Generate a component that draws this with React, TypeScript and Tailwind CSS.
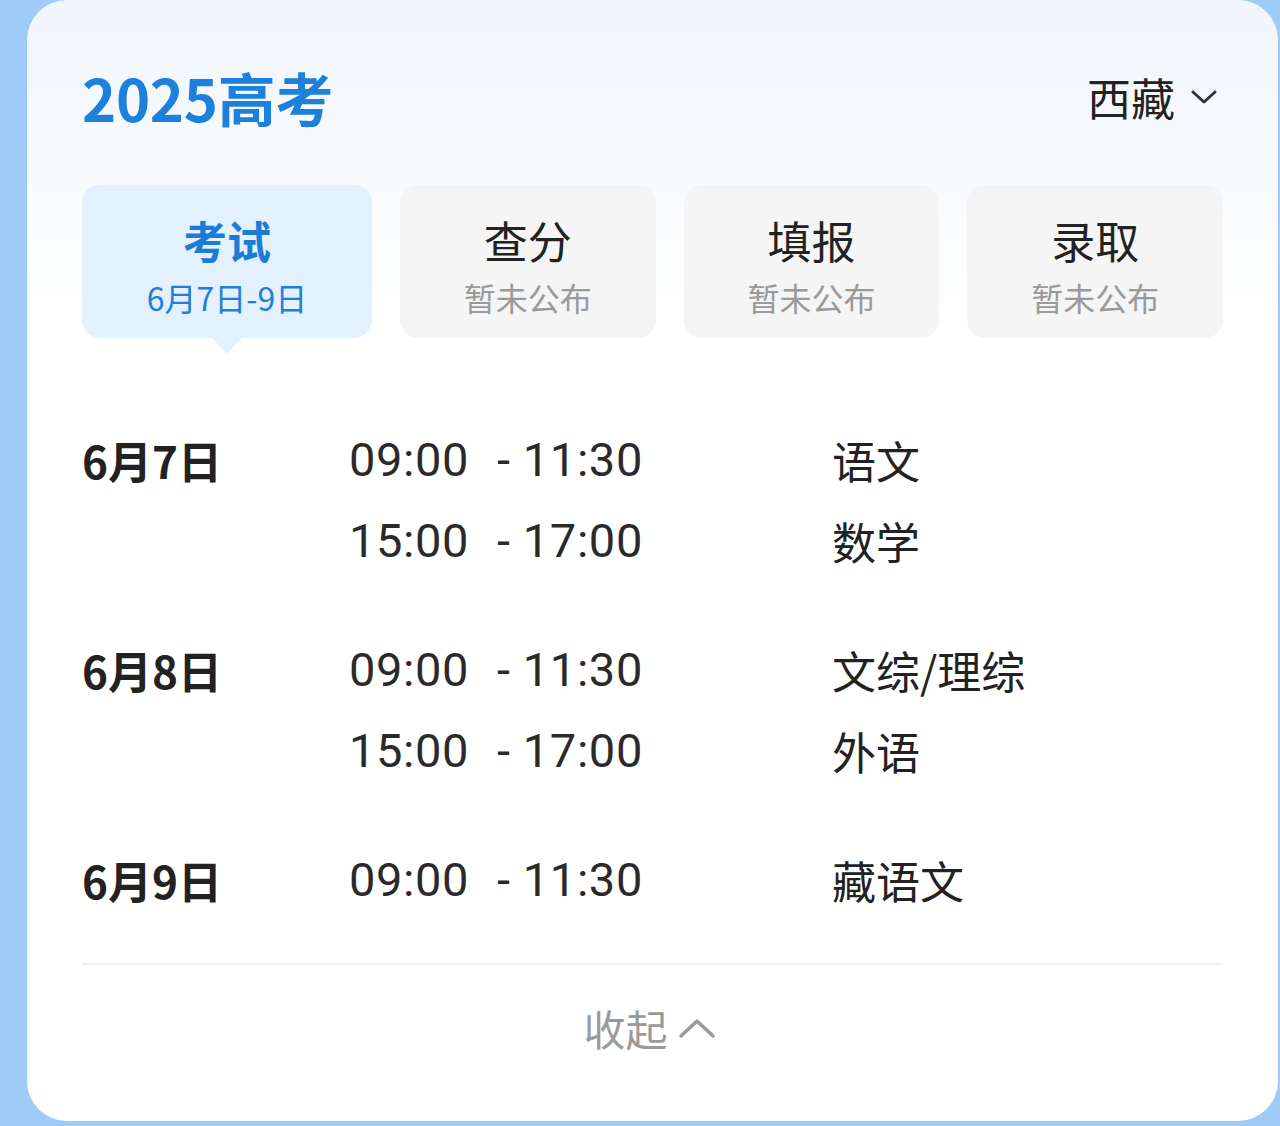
import React from "react";

const cjk = { fontFamily: '"Noto Sans CJK SC", "Noto Sans", sans-serif' };
const num = { fontFamily: 'Roboto, "Noto Sans CJK SC", sans-serif' };

type Row = { date?: string; start: string; end: string; subject: string; gapTop?: boolean };

const rows: Row[] = [
  { date: "6月7日", start: "09:00", end: "11:30", subject: "语文" },
  { start: "15:00", end: "17:00", subject: "数学" },
  { date: "6月8日", start: "09:00", end: "11:30", subject: "文综/理综", gapTop: true },
  { start: "15:00", end: "17:00", subject: "外语" },
  { date: "6月9日", start: "09:00", end: "11:30", subject: "藏语文", gapTop: true },
];

function Tab({ title, sub, active }: { title: string; sub: string; active?: boolean }) {
  return (
    <div
      className={
        "relative flex flex-col items-center rounded-[18px] pt-[33px] " +
        (active ? "bg-[#e3f0fd]" : "bg-[#f5f5f5]")
      }
    >
      <div
        className={
          "text-[44px] leading-[44px] " +
          (active ? "font-bold text-[#1b7bd6]" : "font-normal text-[#222222]")
        }
      >
        {title}
      </div>
      <div
        className={
          "mt-[19px] text-[32px] leading-[32px] " +
          (active ? "text-[#1f7fd8]" : "text-[#9a9a9a]")
        }
      >
        {sub}
      </div>
      {active && (
        <div className="absolute left-1/2 bottom-[-16px] h-0 w-0 -translate-x-1/2 border-l-[15px] border-r-[15px] border-t-[16px] border-l-transparent border-r-transparent border-t-[#e3f0fd]" />
      )}
    </div>
  );
}

export default function App() {
  return (
    <div className="min-h-[1126px] w-[1280px] bg-[#9fcbf9] pl-[27px] pr-[2px]" style={cjk}>
      <div className="flex h-[1121px] flex-col rounded-[40px] bg-linear-to-b from-[#f0f6fc] via-white via-[30%] to-white px-[55px]">
        {/* header */}
        <div className="mt-[57px] flex h-[80px] items-center justify-between">
          <div className="text-[58px] font-bold leading-none tracking-[-0.3px] text-[#1e80dd]">
            2025高考
          </div>
          <div className="flex items-center gap-[16px] pr-[6px] text-[44px] leading-none text-[#222222]">
            <span>西藏</span>
            <svg width="26" height="16" viewBox="0 0 26 16" fill="none">
              <path d="M2 3 L13 13 L24 3" stroke="#333333" strokeWidth="3" strokeLinecap="round" strokeLinejoin="round" />
            </svg>
          </div>
        </div>

        {/* tabs */}
        <div className="mt-[48px] grid h-[153px] grid-cols-[290px_1fr_1fr_1fr] gap-[28px]">
          <Tab title="考试" sub="6月7日-9日" active />
          <Tab title="查分" sub="暂未公布" />
          <Tab title="填报" sub="暂未公布" />
          <Tab title="录取" sub="暂未公布" />
        </div>

        {/* schedule */}
        <div className="mt-[81px] flex flex-col">
          {rows.map((r, i) => (
            <div
              key={i}
              className={"grid h-[81px] grid-cols-[267px_483px_1fr] items-center " + (r.gapTop ? "mt-[48px]" : "")}
            >
              <div className="text-[44px] font-bold leading-none text-[#222222]">{r.date ?? ""}</div>
              <div className="flex items-center text-[47px] leading-none tracking-[0.6px] text-[#2a2a2a]" style={num}>
                <span className="w-[148px]">{r.start}</span>
                <span>- {r.end}</span>
              </div>
              <div className="text-[44px] leading-none text-[#222222]">{r.subject}</div>
            </div>
          ))}
        </div>

        {/* divider */}
        <div className="mt-[43px] h-[2px] bg-[#f0f0f0]" />

        {/* footer */}
        <div className="flex h-[126px] items-center justify-center gap-[10px] pr-[6px] text-[42px] leading-none text-[#9a9a9a]">
          <span>收起</span>
          <svg width="38" height="22" viewBox="0 0 38 22" fill="none">
            <path d="M3 19 L19 4 L35 19" stroke="#9a9a9a" strokeWidth="3.5" strokeLinecap="round" strokeLinejoin="round" />
          </svg>
        </div>
      </div>
    </div>
  );
}
